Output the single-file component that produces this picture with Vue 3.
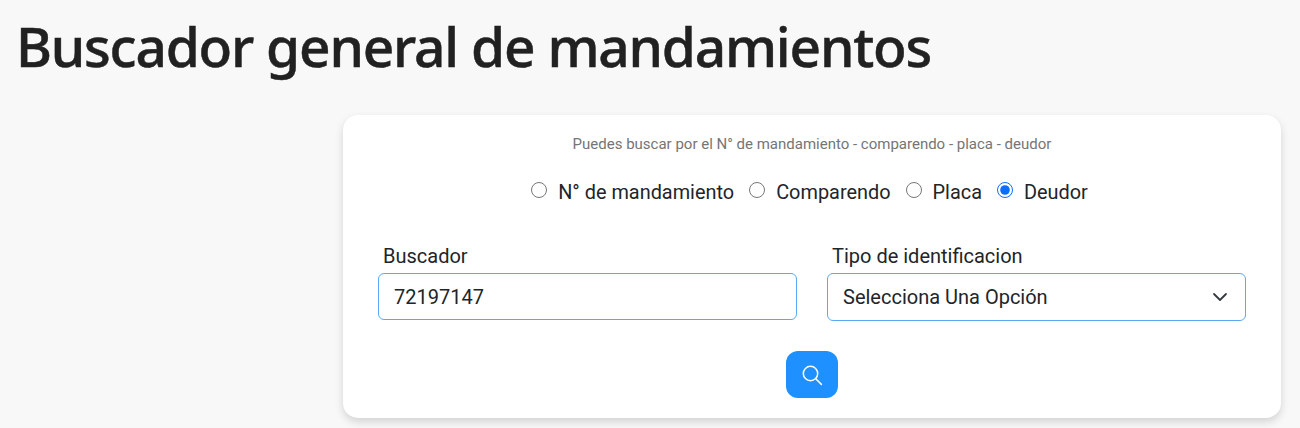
<script setup>
const options = [
  { label: 'N° de mandamiento', checked: false },
  { label: 'Comparendo', checked: false },
  { label: 'Placa', checked: false },
  { label: 'Deudor', checked: true },
]
</script>

<template>
  <main class="page">
    <h1 class="title">Buscador general de mandamientos</h1>
    <div class="wrap">
      <section class="card">
        <p class="hint">Puedes buscar por el N° de mandamiento - comparendo - placa - deudor</p>
        <div class="radios">
          <label v-for="o in options" :key="o.label" class="radio">
            <input type="radio" name="tipo" :checked="o.checked" />
            <span class="radio-text">{{ o.label }}</span>
          </label>
        </div>
        <div class="fields">
          <div class="field">
            <label class="lbl">Buscador</label>
            <input class="control" type="text" value="72197147" />
          </div>
          <div class="field">
            <label class="lbl">Tipo de identificacion</label>
            <div class="control select">
              <span>Selecciona Una Opción</span>
              <svg width="16" height="16" viewBox="0 0 16 16" fill="none" stroke="#343a40" stroke-width="1.8" stroke-linecap="round" stroke-linejoin="round"><path d="M2 5l6 6 6-6"/></svg>
            </div>
          </div>
        </div>
        <div class="actions">
          <button class="btn" type="button" aria-label="Buscar">
            <svg width="22" height="22" viewBox="0 0 22 22" fill="none" stroke="#fff" stroke-width="1.5" stroke-linecap="round"><circle cx="9.5" cy="9.5" r="7.2"/><path d="M14.8 14.8l5.6 5.6"/></svg>
          </button>
        </div>
      </section>
    </div>
  </main>
</template>

<style>
html, body { margin: 0; background: #f8f8f8; }
</style>

<style scoped>
.page { height: 428px; overflow: hidden; background: #f8f8f8; font-family: Roboto, sans-serif; color: #212529; }
.title {
  margin: 0;
  padding: 7px 0 0 16px;
  font-family: "Noto Sans", sans-serif;
  font-size: 55px;
  line-height: 77px;
  font-weight: 500;
  letter-spacing: -1.2px;
  -webkit-text-stroke: 0.5px #212121;
  color: #212121;
}
.wrap { display: flex; justify-content: flex-end; padding: 31px 19px 0 0; }
.card {
  box-sizing: border-box;
  width: 938px;
  height: 303px;
  background: #fff;
  border-radius: 15px;
  box-shadow: 0 4px 8px rgba(0, 0, 0, 0.15);
  padding: 20px 35px 0;
}
.hint { margin: 0; text-align: center; font-size: 15px; line-height: 18px; color: #757575; }
.radios { display: flex; justify-content: center; gap: 15px; margin-top: 27px; padding-right: 5px; font-size: 19.9px; line-height: 24px; }
.radio { display: flex; align-items: flex-start; gap: 11px; }
.radio input { width: 16px; height: 16px; margin: 2px 0 0; accent-color: #0d6efd; }
.radio-text { padding-top: 1px; }
.fields { display: grid; grid-template-columns: 419px 419px; gap: 30px; margin-top: 39px; }
.field { display: flex; flex-direction: column; }
.lbl { padding-left: 5px; font-size: 20px; line-height: 24px; margin-bottom: 5px; }
.control {
  box-sizing: border-box;
  width: 100%;
  height: 47px;
  border: 1px solid #5ba9f5;
  border-radius: 6px;
  background: #fff;
  padding: 0 15px;
  font-family: Roboto, sans-serif;
  font-size: 20px;
  color: #212529;
  outline: none;
}
.select { display: flex; align-items: center; justify-content: space-between; height: 48px; padding-right: 17px; }
.actions { display: flex; justify-content: center; margin-top: 30px; }
.btn {
  display: flex;
  align-items: center;
  justify-content: center;
  width: 52px;
  height: 47px;
  padding: 0;
  border: 0;
  border-radius: 12px;
  background: #1e90ff;
}
</style>
